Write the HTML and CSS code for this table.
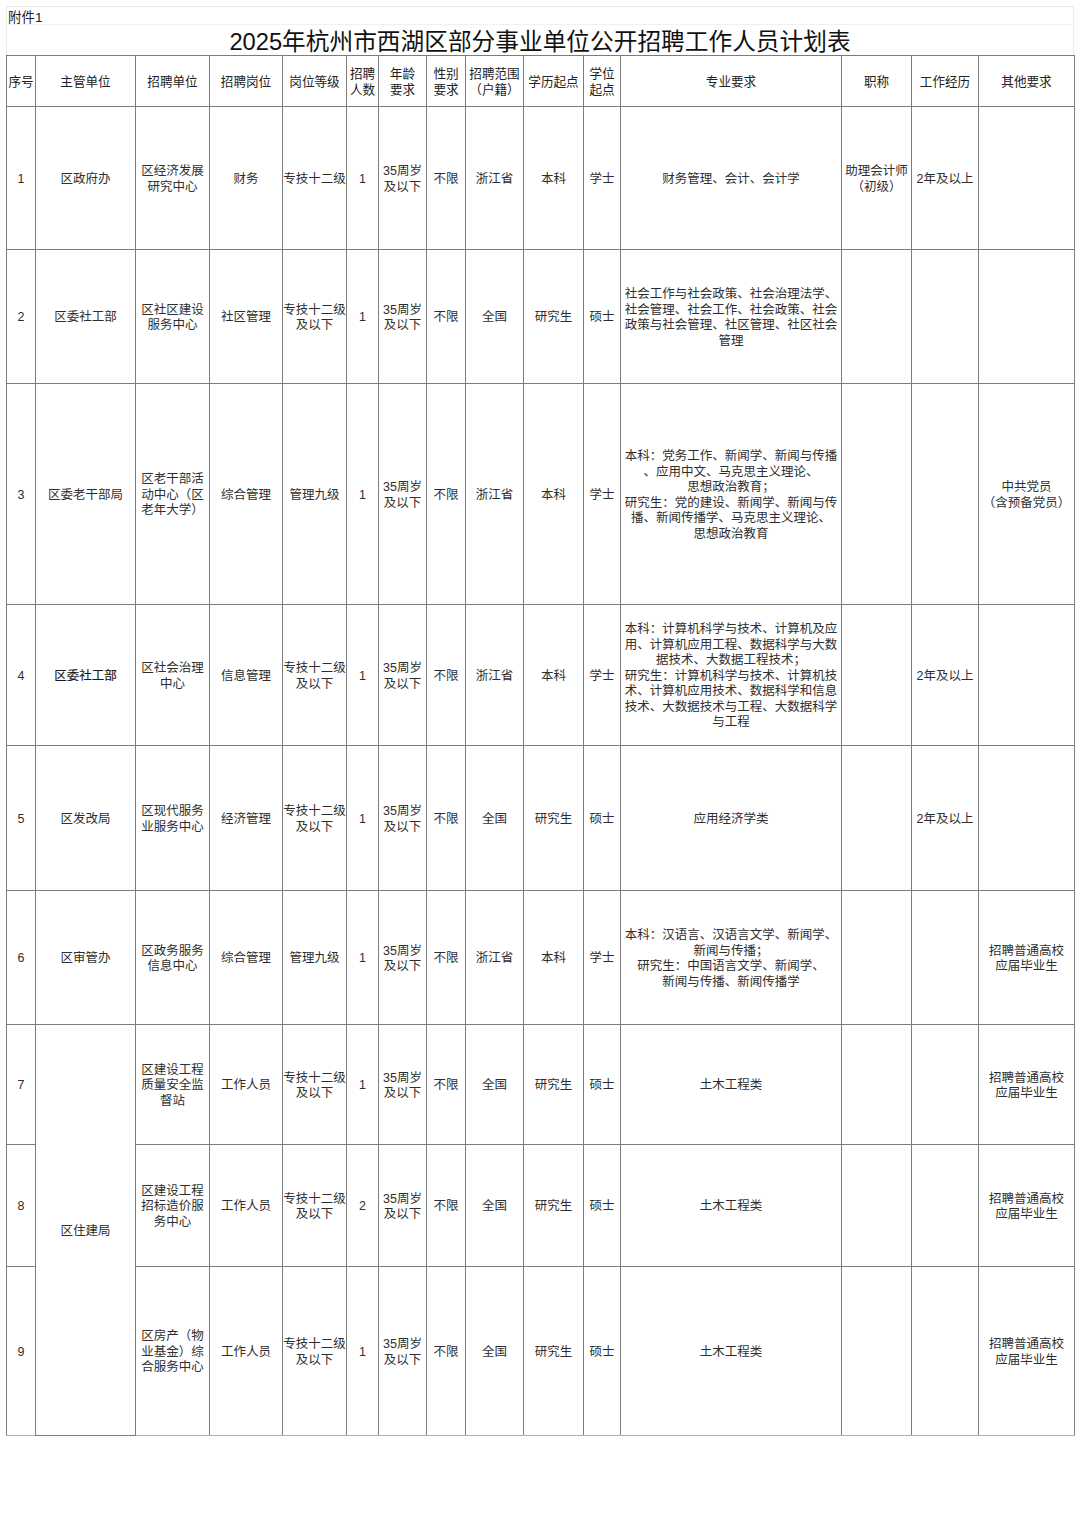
FILE: index.html
```html
<!DOCTYPE html>
<html lang="zh-CN">
<head>
<meta charset="utf-8">
<title>2025年杭州市西湖区部分事业单位公开招聘工作人员计划表</title>
<link rel="stylesheet" href="styles.css">
</head>
<body>
<div class="sheet">
  <div class="attach">附件1</div>
  <div class="title">2025年杭州市西湖区部分事业单位公开招聘工作人员计划表</div>
  <table class="plan">
    <colgroup>
      <col class="c-no"><col class="c-dept"><col class="c-unit"><col class="c-post"><col class="c-level">
      <col class="c-num"><col class="c-age"><col class="c-sex"><col class="c-range"><col class="c-edu">
      <col class="c-deg"><col class="c-major"><col class="c-title"><col class="c-exp"><col class="c-other">
    </colgroup>
    <thead>
      <tr class="rh">
        <th>序号</th><th>主管单位</th><th>招聘单位</th><th>招聘岗位</th><th>岗位等级</th>
        <th>招聘<br>人数</th><th>年龄<br>要求</th><th>性别<br>要求</th><th>招聘范围<br>（户籍）</th><th>学历起点</th>
        <th>学位<br>起点</th><th>专业要求</th><th>职称</th><th>工作经历</th><th>其他要求</th>
      </tr>
    </thead>
    <tbody>
      <tr class="r1">
        <td>1</td><td>区政府办</td><td>区经济发展<br>研究中心</td><td>财务</td><td>专技十二级</td>
        <td>1</td><td>35周岁<br>及以下</td><td>不限</td><td>浙江省</td><td>本科</td>
        <td>学士</td><td>财务管理、会计、会计学</td><td>助理会计师<br>（初级）</td><td>2年及以上</td><td></td>
      </tr>
      <tr class="r2">
        <td>2</td><td>区委社工部</td><td>区社区建设<br>服务中心</td><td>社区管理</td><td>专技十二级<br>及以下</td>
        <td>1</td><td>35周岁<br>及以下</td><td>不限</td><td>全国</td><td>研究生</td>
        <td>硕士</td><td>社会工作与社会政策、社会治理法学、<br>社会管理、社会工作、社会政策、社会<br>政策与社会管理、社区管理、社区社会<br>管理</td><td></td><td></td><td></td>
      </tr>
      <tr class="r3">
        <td>3</td><td>区委老干部局</td><td>区老干部活<br>动中心（区<br>老年大学）</td><td>综合管理</td><td>管理九级</td>
        <td>1</td><td>35周岁<br>及以下</td><td>不限</td><td>浙江省</td><td>本科</td>
        <td>学士</td><td>本科：党务工作、新闻学、新闻与传播<br>、应用中文、马克思主义理论、<br>思想政治教育；<br>研究生：党的建设、新闻学、新闻与传<br>播、新闻传播学、马克思主义理论、<br>思想政治教育</td><td></td><td></td><td>中共党员<br>（含预备党员）</td>
      </tr>
      <tr class="r4">
        <td>4</td><td class="strong">区委社工部</td><td>区社会治理<br>中心</td><td>信息管理</td><td>专技十二级<br>及以下</td>
        <td>1</td><td>35周岁<br>及以下</td><td>不限</td><td>浙江省</td><td>本科</td>
        <td>学士</td><td>本科：计算机科学与技术、计算机及应<br>用、计算机应用工程、数据科学与大数<br>据技术、大数据工程技术；<br>研究生：计算机科学与技术、计算机技<br>术、计算机应用技术、数据科学和信息<br>技术、大数据技术与工程、大数据科学<br>与工程</td><td></td><td>2年及以上</td><td></td>
      </tr>
      <tr class="r5">
        <td>5</td><td>区发改局</td><td>区现代服务<br>业服务中心</td><td>经济管理</td><td>专技十二级<br>及以下</td>
        <td>1</td><td>35周岁<br>及以下</td><td>不限</td><td>全国</td><td>研究生</td>
        <td>硕士</td><td>应用经济学类</td><td></td><td>2年及以上</td><td></td>
      </tr>
      <tr class="r6">
        <td>6</td><td>区审管办</td><td>区政务服务<br>信息中心</td><td>综合管理</td><td>管理九级</td>
        <td>1</td><td>35周岁<br>及以下</td><td>不限</td><td>浙江省</td><td>本科</td>
        <td>学士</td><td>本科：汉语言、汉语言文学、新闻学、<br>新闻与传播；<br>研究生：中国语言文学、新闻学、<br>新闻与传播、新闻传播学</td><td></td><td></td><td>招聘普通高校<br>应届毕业生</td>
      </tr>
      <tr class="r7">
        <td>7</td><td rowspan="3">区住建局</td><td>区建设工程<br>质量安全监<br>督站</td><td>工作人员</td><td>专技十二级<br>及以下</td>
        <td>1</td><td>35周岁<br>及以下</td><td>不限</td><td>全国</td><td>研究生</td>
        <td>硕士</td><td>土木工程类</td><td></td><td></td><td>招聘普通高校<br>应届毕业生</td>
      </tr>
      <tr class="r8">
        <td>8</td><td>区建设工程<br>招标造价服<br>务中心</td><td>工作人员</td><td>专技十二级<br>及以下</td>
        <td>2</td><td>35周岁<br>及以下</td><td>不限</td><td>全国</td><td>研究生</td>
        <td>硕士</td><td>土木工程类</td><td></td><td></td><td>招聘普通高校<br>应届毕业生</td>
      </tr>
      <tr class="r9">
        <td>9</td><td>区房产（物<br>业基金）综<br>合服务中心</td><td>工作人员</td><td>专技十二级<br>及以下</td>
        <td>1</td><td>35周岁<br>及以下</td><td>不限</td><td>全国</td><td>研究生</td>
        <td>硕士</td><td>土木工程类</td><td></td><td></td><td>招聘普通高校<br>应届毕业生</td>
      </tr>
    </tbody>
  </table>
</div>
</body>
</html>
```
FILE: styles.css
```css
html, body {
  margin: 0;
  padding: 0;
  background: #ffffff;
}

body {
  font-family: "Liberation Sans", "Noto Sans CJK SC", sans-serif;
  color: #2e2e2e;
}

.sheet {
  margin: 6px 0 0 6px;
  width: 1068px;
}

.attach {
  box-sizing: border-box;
  height: 18px;
  border-top: 1px solid #e6e6e6;
  border-left: 1px solid #ececec;
  border-right: 1px solid #ececec;
  font-size: 13.5px;
  line-height: 17px;
  padding-top: 2px;
  padding-left: 1px;
  color: #222;
}

.title {
  box-sizing: border-box;
  height: 31px;
  border-top: 1px solid #f0f0f0;
  border-left: 1px solid #ececec;
  border-right: 1px solid #ececec;
  font-size: 23.7px;
  line-height: 28px;
  padding-top: 3px;
  text-align: center;
  color: #111;
}

.plan {
  width: 1068px;
  table-layout: fixed;
  border-collapse: collapse;
  border-bottom: 1px solid #b0b0b0;
}

.plan th,
.plan td {
  border: 1px solid #7c7c7c;
  padding: 3px 0 0;
  font-size: 12.5px;
  line-height: 15.5px;
  font-weight: 400;
  text-align: center;
  vertical-align: middle;
  white-space: nowrap;
  overflow: visible;
}

.plan th {
  color: #222;
  font-size: 12.6px;
}

.plan tbody tr:last-child td {
  border-bottom-color: #b0b0b0;
}

.plan .strong {
  color: #1a1a1a;
  -webkit-text-stroke: 0.15px #1a1a1a;
}

.c-no { width: 29px; }
.c-dept { width: 100px; }
.c-unit { width: 74px; }
.c-post { width: 73px; }
.c-level { width: 64px; }
.c-num { width: 32px; }
.c-age { width: 48px; }
.c-sex { width: 39px; }
.c-range { width: 58px; }
.c-edu { width: 60px; }
.c-deg { width: 37px; }
.c-major { width: 221px; }
.c-title { width: 70px; }
.c-exp { width: 67px; }
.c-other { width: 96px; }

.rh { height: 51px; }
.r1 { height: 143px; }
.r2 { height: 134px; }
.r3 { height: 221px; }
.r4 { height: 141px; }
.r5 { height: 145px; }
.r6 { height: 134px; }
.r7 { height: 120px; }
.r8 { height: 122px; }
.r9 { height: 169px; }
```
